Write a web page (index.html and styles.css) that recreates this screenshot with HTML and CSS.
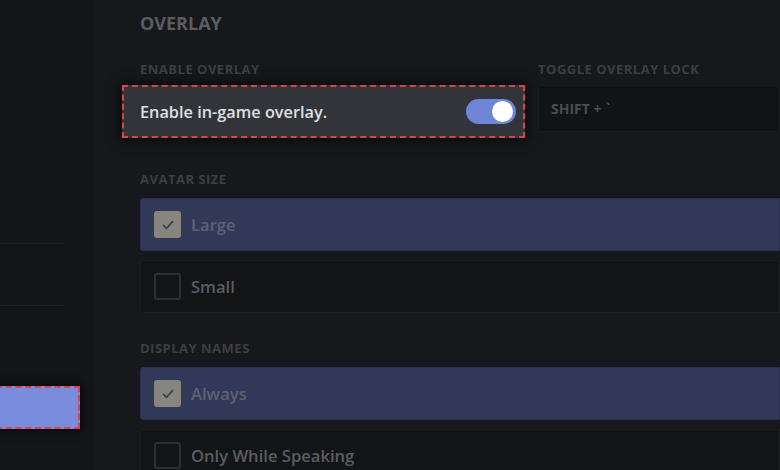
FILE: index.html
```html
<!DOCTYPE html>
<html>
<head>
<meta charset="utf-8">
<link rel="stylesheet" href="styles.css">
</head>
<body>
<div class="app">
  <aside class="sidebar">
    <div class="side-sep first"></div>
    <div class="side-sep second"></div>
    <div class="side-item-active"></div>
  </aside>
  <main class="main">
    <h2 class="title">OVERLAY</h2>
    <div class="top-row">
      <div class="col-left">
        <div class="label">ENABLE OVERLAY</div>
        <div class="switch-row highlight">
          <span class="switch-text">Enable in-game overlay.</span>
          <span class="toggle"><span class="knob"></span></span>
        </div>
      </div>
      <div class="col-right">
        <div class="label">TOGGLE OVERLAY LOCK</div>
        <div class="keybind">SHIFT + `</div>
      </div>
    </div>

    <div class="label section-label">AVATAR SIZE</div>
    <div class="options">
      <div class="option selected">
        <span class="checkbox checked">
          <svg viewBox="0 0 24 24" width="18" height="18"><path d="M6 12.5l4 4 8-9" fill="none" stroke="#3b3f52" stroke-width="2.2" stroke-linecap="round" stroke-linejoin="round"/></svg>
        </span>
        <span class="option-text">Large</span>
      </div>
      <div class="option">
        <span class="checkbox"></span>
        <span class="option-text">Small</span>
      </div>
    </div>

    <div class="label section-label second-section">DISPLAY NAMES</div>
    <div class="options">
      <div class="option selected">
        <span class="checkbox checked">
          <svg viewBox="0 0 24 24" width="18" height="18"><path d="M6 12.5l4 4 8-9" fill="none" stroke="#3b3f52" stroke-width="2.2" stroke-linecap="round" stroke-linejoin="round"/></svg>
        </span>
        <span class="option-text">Always</span>
      </div>
      <div class="option">
        <span class="checkbox"></span>
        <span class="option-text">Only While Speaking</span>
      </div>
    </div>
  </main>
</div>
</body>
</html>
```

FILE: styles.css
```css
* { box-sizing: border-box; }
html, body {
  margin: 0;
  padding: 0;
  width: 780px;
  height: 470px;
  overflow: hidden;
  background: #17181b;
  font-family: "Open Sans", "Liberation Sans", sans-serif;
}
.app {
  display: flex;
  height: 470px;
}
.sidebar {
  position: relative;
  width: 93px;
  flex: 0 0 93px;
  background: #141518;
  border-right: 1px solid #121315;
}
.side-sep {
  position: absolute;
  left: 0;
  width: 65px;
  height: 1px;
  background: #202125;
}
.side-sep.first { top: 243px; }
.side-sep.second { top: 305px; }
.side-item-active {
  position: absolute;
  left: -4px;
  top: 386px;
  width: 84px;
  height: 43px;
  background: #7a8ddc;
  border: 2px dashed #d9434c;
  box-shadow: 0 0 8px 2px rgba(0, 0, 0, 0.55);
}
.main {
  flex: 1;
  padding: 12px 0 0 47px;
  min-width: 0;
}
.title {
  margin: 0;
  font-size: 18px;
  line-height: 22px;
  font-weight: 700;
  color: #5a5c60;
}
.label {
  font-size: 13px;
  line-height: 16px;
  font-weight: 700;
  color: #3c3e42;
  letter-spacing: 0.5px;
}
.top-row {
  display: grid;
  grid-template-columns: 398px 1fr;
  margin-top: 27px;
}
.col-left .label,
.col-right .label {
  margin-bottom: 8px;
}
.switch-row {
  display: flex;
  align-items: center;
  justify-content: space-between;
  height: 53px;
  width: 403px;
  margin-left: -18px;
  padding: 0 7px 0 16px;
  background: #323439;
  border: 2px dashed #d9434c;
  box-shadow: 0 0 10px 3px rgba(0, 0, 0, 0.6);
}
.switch-text {
  font-size: 16.3px;
  font-weight: 600;
  color: #dfe0e1;
}
.toggle {
  position: relative;
  width: 50px;
  height: 25px;
  border-radius: 13px;
  background: #6f86d6;
}
.knob {
  position: absolute;
  right: 3px;
  top: 2px;
  width: 21px;
  height: 21px;
  border-radius: 50%;
  background: #ffffff;
}
.keybind {
  height: 47px;
  margin-top: 3px;
  padding-left: 12px;
  display: flex;
  align-items: center;
  background: #121315;
  border: 1px solid #1c1d20;
  border-radius: 3px;
  font-size: 14px;
  font-weight: 700;
  color: #4a4c50;
}
.section-label {
  margin-top: 33px;
  margin-bottom: 11px;
}
.second-section {
  margin-top: 27px;
}
.options {
  display: flex;
  flex-direction: column;
  gap: 9px;
}
.option {
  display: flex;
  align-items: center;
  height: 53px;
  padding-left: 13px;
  background: #131416;
  border: 1px solid #1d1e22;
  border-radius: 3px 0 0 3px;
}
.option.selected {
  background: #323858;
  border-color: #2b3050;
}
.checkbox {
  width: 27px;
  height: 27px;
  border: 2px solid #2d2f33;
  border-radius: 3px;
  display: flex;
  align-items: center;
  justify-content: center;
  margin-right: 10px;
}
.checkbox.checked {
  background: #86867f;
  border-color: #86867f;
}
.option-text {
  font-size: 16.6px;
  font-weight: 600;
  color: #5b5d63;
}
.option.selected .option-text {
  color: #5d6173;
}
```
